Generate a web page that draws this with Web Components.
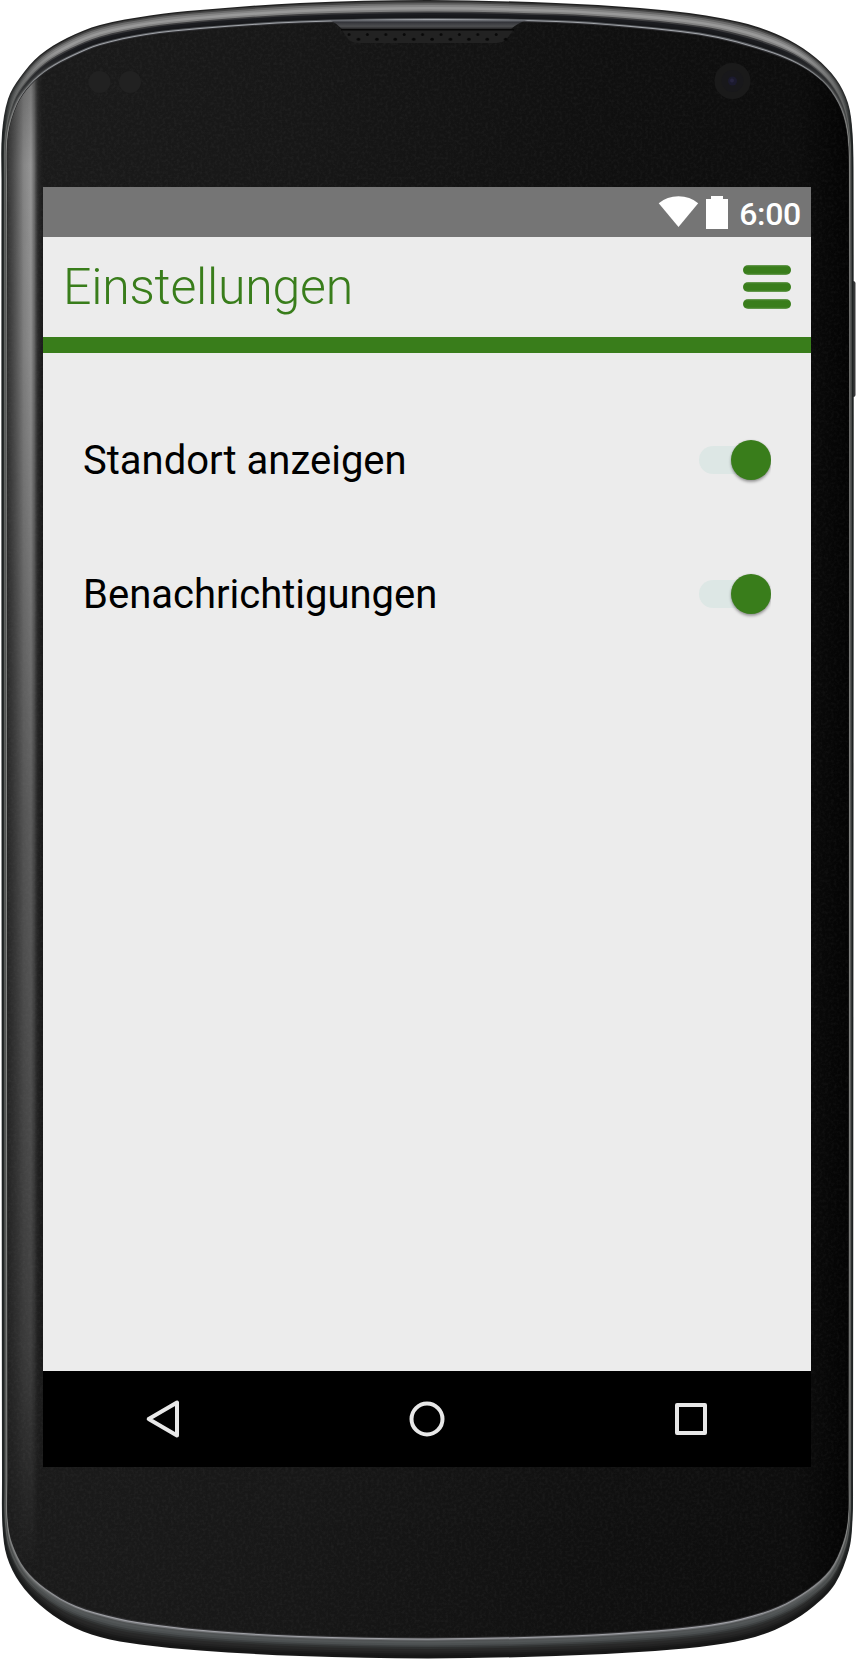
<!DOCTYPE html>
<html lang="de">
<head>
<meta charset="utf-8">
<title>Einstellungen</title>
<style>
html,body{margin:0;padding:0;background:#fff}
body{width:856px;height:1659px;overflow:hidden;font-family:Roboto,"Liberation Sans",sans-serif}
</style>
</head>
<body>
<phone-frame>
  <phone-screen>
    <status-bar slot="status">6:00</status-bar>
    <app-header slot="header">Einstellungen</app-header>
    <setting-row>Standort anzeigen</setting-row>
    <setting-row>Benachrichtigungen</setting-row>
    <nav-bar slot="nav"></nav-bar>
  </phone-screen>
</phone-frame>
<script>
function define(name, html, ready) {
  customElements.define(name, class extends HTMLElement {
    constructor() {
      super();
      const t = document.createElement('template');
      t.innerHTML = html;
      this.attachShadow({mode: 'open'}).appendChild(t.content.cloneNode(true));
      if (ready) ready(this.shadowRoot);
    }
  });
}

/* Outer silhouette and glass edge of the handset, clockwise from top centre. */
const OUTER = [[428,0],[556,3],[640,8],[689,13],[723,18.5],[756,26.5],[789,40],[816,58],[836,79],[848,103],[852.5,133],[853.5,180],[853.5,800],[853,1480],[852.5,1520],[849,1550],[835,1584],[814,1606],[787,1624],[755,1637],[714,1645],[655,1651],[556,1656],[428,1658.5],[300,1656],[200,1650.5],[140,1644.5],[100,1637],[67,1624],[40,1605],[20,1583],[7,1557],[2.5,1527],[2,1480],[1.5,800],[1.5,180],[2,133],[8,99],[20,77.5],[40,55],[67,38],[100,25],[150,15.5],[200,10],[300,3]];
const INNER = [[428,20],[556,22],[625,26.5],[680,32],[718,38],[756,48],[786,58.5],[808,70],[827,86],[841,109],[847.5,136],[849,180],[849,800],[848.5,1480],[848,1518],[843,1543],[830,1570],[808,1590],[778,1607],[740,1619],[700,1626],[640,1631.5],[556,1636],[428,1638.5],[300,1636],[215,1631],[158,1625],[117,1618],[76,1606],[46,1589],[25,1569],[12,1543],[7.5,1517],[7.5,1480],[7,800],[7,180],[8,135],[17,104],[30,85],[49,69],[73,56],[100,45],[146,35],[200,29],[300,22.5]];
function smooth(p) {
  const n = p.length, f = v => v.toFixed(2);
  let d = `M${p[0]}`;
  for (let i = 0; i < n; i++) {
    const a = p[(i+n-1)%n], b = p[i], c = p[(i+1)%n], e = p[(i+2)%n];
    const h = (u, v) => Math.hypot(u[0]-v[0], u[1]-v[1]);
    const l = h(b, c), k1 = l/(h(a,b)+l)/3, k2 = l/(h(c,e)+l)/3;
    d += `C${f(b[0]+(c[0]-a[0])*k1)} ${f(b[1]+(c[1]-a[1])*k1)} ${f(c[0]-(e[0]-b[0])*k2)} ${f(c[1]-(e[1]-b[1])*k2)} ${f(c[0])} ${f(c[1])}`;
  }
  return d + 'Z';
}
const at = t => smooth(OUTER.map((o, i) => [o[0]+(INNER[i][0]-o[0])*t, o[1]+(INNER[i][1]-o[1])*t]));
/* [depth, top, side, bottom] shades of the bevel */
const BEVEL = [
  [0,'#222','#303233','#171717'],[.08,'#444','#1c2020','#161616'],[.16,'#6a6a6a','#1c2020','#1b1b1b'],
  [.25,'#858585','#202424','#222'],[.35,'#999','#2a2d2d','#282828'],[.48,'#808080','#555856','#303232'],
  [.57,'#3c3c3e','#6b6d6b','#3e4142'],[.65,'#1b1c20','#4a4c4b','#4c5051'],[.75,'#18191c','#5f6160','#535758'],
  [.83,'#17181b','#8a8b88','#505354'],[.9,'#55585c','#8b8c8a','#77797c'],[.95,'#a2a5aa','#6b6c6b','#a0a1a6'],[1,'#303033','#232323','#303032']];

define('phone-frame', `
<style>
:host{display:grid;width:856px;height:1659px}
svg,.screen{grid-area:1/1}
.screen{z-index:1;padding:187px 45px 192px 43px}
svg{display:block}
</style>
<svg width="856" height="1659" viewBox="0 0 856 1659" aria-hidden="true">
  <defs>
    <linearGradient id="face" x1="0" x2="1"><stop stop-color="#1b1b1b"/><stop offset=".35" stop-color="#171717"/><stop offset=".7" stop-color="#101010"/><stop offset=".93" stop-color="#0d0d0d"/><stop offset="1" stop-color="#020202"/></linearGradient>
    <linearGradient id="gleam" gradientUnits="userSpaceOnUse" x1="7" x2="44" y1="0" y2="0"><stop stop-color="#555" stop-opacity=".4"/><stop offset=".2" stop-color="#606060" stop-opacity=".8"/><stop offset=".45" stop-color="#858585"/><stop offset=".65" stop-color="#969696"/><stop offset=".74" stop-color="#777" stop-opacity=".85"/><stop offset=".84" stop-color="#444" stop-opacity=".4"/><stop offset="1" stop-color="#222" stop-opacity="0"/></linearGradient>
    <linearGradient id="fade" gradientUnits="userSpaceOnUse" x1="0" x2="0" y1="75" y2="1570"><stop stop-color="#bbb"/><stop offset=".06" stop-color="#fff"/><stop offset=".18" stop-color="#eee"/><stop offset=".5" stop-color="#888"/><stop offset=".85" stop-color="#4c4c4c"/><stop offset="1" stop-color="#000"/></linearGradient>
    <mask id="m" maskUnits="userSpaceOnUse" x="0" y="0" width="60" height="1659"><rect width="60" height="1659" fill="url(#fade)"/></mask>
    <linearGradient id="lip" x1="0" x2="0" y1="0" y2="1"><stop stop-color="#777a80"/><stop offset=".25" stop-color="#34353a"/><stop offset=".7" stop-color="#4d4e50"/><stop offset="1" stop-color="#242425"/></linearGradient>
    <filter id="grain" x="0" y="0" width="1" height="1"><feTurbulence type="fractalNoise" baseFrequency=".35" numOctaves="2" seed="4"/><feColorMatrix values="0 0 0 0 .6 0 0 0 0 .6 0 0 0 0 .6 .25 0 0 0 -.09"/></filter>
    <pattern id="holes" width="18.4" height="10" patternUnits="userSpaceOnUse" x="340" y="31"><circle cx="9" cy="3.5" r="1.5" fill="#080808"/><circle cx="0.4" cy="8.3" r="1.5" fill="#080808"/><circle cx="18.2" cy="8.3" r="1.5" fill="#080808"/></pattern>
    <clipPath id="glass"><path id="glasspath"/></clipPath>
  </defs>
  <rect x="850" y="281" width="5.5" height="116" rx="2.5" fill="#38393a"/>
  <g id="bevel"></g>
  <g clip-path="url(#glass)">
    <rect width="856" height="1659" fill="url(#face)"/>
    <rect width="856" height="1659" filter="url(#grain)" opacity=".4"/>
    <rect width="60" height="1659" fill="url(#gleam)" mask="url(#m)"/>
  </g>
  <path d="M330 20L528 20Q519 22 511 29L342 29Q336 23 330 20Z" fill="url(#lip)"/>
  <path d="M341 29H514L506 40Q502 43 497 43H359Q352 43 348 39Z" fill="#222"/>
  <path d="M341 29.7H514" stroke="#070707" stroke-width="1.5"/>
  <rect x="346" y="31" width="163" height="10" fill="url(#holes)"/>
  <circle cx="99.5" cy="82" r="11" fill="#212121"/><circle cx="130" cy="82" r="11" fill="#212121"/>
  <circle cx="732.5" cy="81" r="18" fill="#1a1a1a"/><circle cx="732.5" cy="81" r="11" fill="#18181b"/><circle cx="732.5" cy="81" r="4.5" fill="#1b1a2e"/><circle cx="732" cy="80.5" r="2" fill="#26243f"/>
</svg>
<div class="screen"><slot></slot></div>`, root => {
  const g = root.getElementById('bevel'), defs = root.querySelector('defs');
  let grads = '', paths = '';
  BEVEL.forEach(([t, top, side, bottom], i) => {
    grads += `<linearGradient id="b${i}" gradientUnits="userSpaceOnUse" x1="0" x2="0" y1="0" y2="1659"><stop offset=".03" stop-color="${top}"/><stop offset=".08" stop-color="${side}"/><stop offset=".915" stop-color="${side}"/><stop offset=".975" stop-color="${bottom}"/></linearGradient>`;
    paths += `<path d="${at(t)}" fill="url(#b${i})"/>`;
  });
  defs.insertAdjacentHTML('beforeend', grads);
  g.innerHTML = paths;
  root.getElementById('glasspath').setAttribute('d', at(1.05));
});

define('phone-screen', `
<style>
:host{display:flex;flex-direction:column;width:768px;height:1280px;background:#ececec}
main{flex:1;padding:40px 40px 0}
</style>
<slot name="status"></slot><slot name="header"></slot><main><slot></slot></main><slot name="nav"></slot>`);

define('status-bar', `
<style>
:host{display:flex;align-items:center;justify-content:flex-end;height:50px;background:#757575;color:#fff;font-weight:500;font-size:32px;line-height:50px}
svg{display:block;flex:none;margin-right:10px}
span{margin-right:10px;padding-top:4px;height:46px;line-height:46px;letter-spacing:-.3px}
</style>
<svg width="71" height="50" viewBox="658 187 71 50" fill="#fff" aria-hidden="true"><path d="M658.7 203.2Q667 196.2 678.5 196.2T698.2 203.2L678.5 227Z"/><path d="M711 196h12v3h5v30h-22v-30h5z"/></svg><span><slot></slot></span>`);

define('app-header', `
<style>
:host{display:flex;box-sizing:border-box;align-items:center;justify-content:space-between;height:116px;padding:0 20px;border-bottom:16px solid #397d1b;color:#397d1b}
h1{margin:0;font-size:50px;font-weight:300;line-height:100px;letter-spacing:-.23px}
.menu{display:flex;flex-direction:column;gap:7px;width:48px}
i{height:10px;border-radius:5px;background:linear-gradient(#397d1bb0,#397d1b 18%,#397d1b 82%,#397d1bb0)}
</style>
<h1><slot></slot></h1><div class="menu"><i></i><i></i><i></i></div>`);

define('toggle-switch', `
<style>
:host{display:flex;align-items:center;width:72px;height:60px;overflow:hidden}
.track{flex:1;height:28px;margin-right:-20px;border-radius:14px 0 0 14px;background:#dde7e5}
.thumb{position:relative;width:40px;height:40px;border-radius:50%;background:#397d1b;box-shadow:0 2px 3px rgba(0,0,0,.35),0 0 2px rgba(0,0,0,.12)}
</style>
<div class="track"></div><div class="thumb"></div>`);

define('setting-row', `
<style>
:host{display:flex;align-items:center;justify-content:space-between;height:134px;font-size:40px;color:#000}
</style>
<span><slot></slot></span><toggle-switch></toggle-switch>`);

define('nav-bar', `
<style>
:host{display:block;height:96px;background:#000}
svg{display:block}
</style>
<svg width="768" height="96" viewBox="43 1371 768 96" fill="none" stroke="#e8e8e8" stroke-width="4" stroke-linejoin="round" aria-hidden="true"><path d="M148.7 1419L177 1402.5V1435.5Z"/><circle cx="427" cy="1419" r="15.5"/><rect x="677" y="1405" width="28" height="28"/></svg>`);
</script>
</body>
</html>
